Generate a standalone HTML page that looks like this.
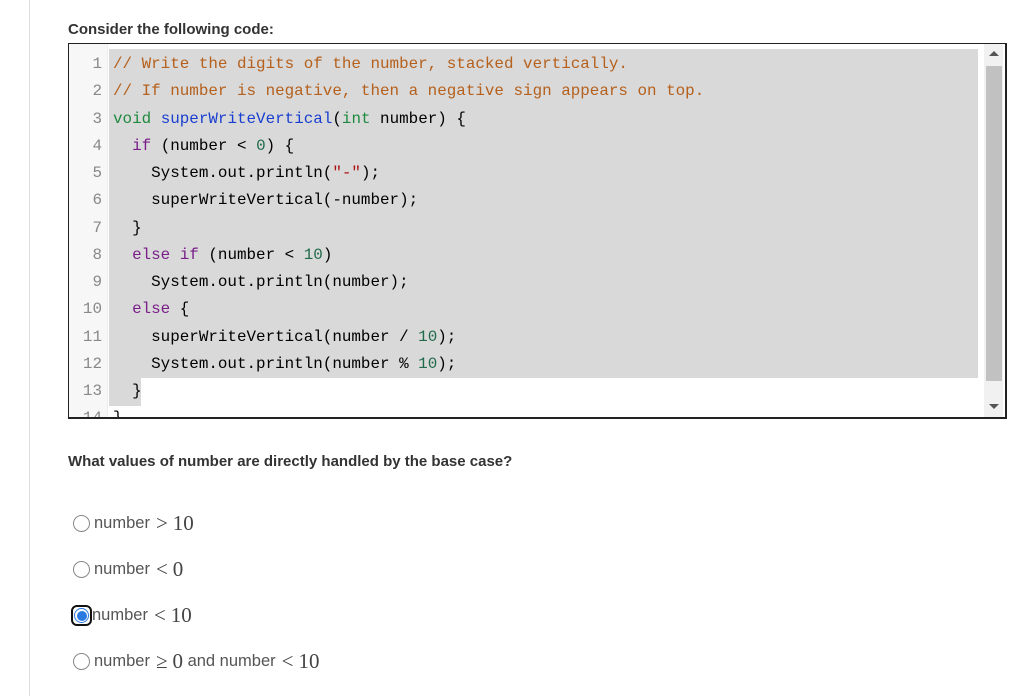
<!DOCTYPE html>
<html><head><style>
body{margin:0;width:1024px;height:696px;background:#fff;font-family:"Liberation Sans",sans-serif;position:relative;overflow:hidden}
.vl{position:absolute;left:29px;top:0;width:1px;height:696px;background:#ddd}
.t{position:absolute;left:68px;font-size:15px;font-weight:bold;color:#333}
.box{position:absolute;left:68px;top:43px;width:936px;height:373px;border:1px solid #222;border-width:1px 2px 2px 1px;overflow:hidden;background:#fff}
.gut{position:absolute;left:0;top:0;width:38px;height:100%;background:#f7f7f7;border-right:1px solid #eee}
.hl{position:absolute;left:40px;top:5px;width:869px;height:329px;background:#d9d9d9}
.hl2{position:absolute;left:40px;top:334px;width:32px;height:28px;background:#d9d9d9}
.code{position:absolute;left:0;top:7px;font-family:"Liberation Mono",monospace;font-size:15.9px;line-height:27.25px;white-space:pre;color:#000}
.n{display:inline-block;width:33px;text-align:right;color:#888;margin-right:11px}
.c{color:#b5601c}.k{color:#7a1f8a}.g{color:#1f8a3f}.f{color:#1a3fd0}.num{color:#1f6a4a}.s{color:#a11}
.sb{position:absolute;left:915px;top:0;width:19px;height:100%;background:#f1f1f1}
.th{position:absolute;left:2px;top:22px;width:16px;height:315px;background:#c1c1c1}
.opt{position:absolute;left:73px;font-size:16.5px;color:#555;display:flex;align-items:center}
.r{width:17px;height:17px;border:1px solid #888;border-radius:50%;box-sizing:border-box;margin-right:4px;background:#fff}
.m{font-family:"Liberation Serif",serif;font-size:21px;color:#444}
.o{margin:0 5px 0 6px}
</style></head><body>
<div class="vl"></div>
<div class="t" style="top:21px">Consider the following code:</div>
<div class="box">
<div class="gut"></div><div class="hl"></div><div class="hl2"></div>
<div class="code"><span class="n">1</span><span class="c">// Write the digits of the number, stacked vertically.</span>
<span class="n">2</span><span class="c">// If number is negative, then a negative sign appears on top.</span>
<span class="n">3</span><span class="g">void</span> <span class="f">superWriteVertical</span>(<span class="g">int</span> number) {
<span class="n">4</span>  <span class="k">if</span> (number &lt; <span class="num">0</span>) {
<span class="n">5</span>    System.out.println(<span class="s">"-"</span>);
<span class="n">6</span>    superWriteVertical(-number);
<span class="n">7</span>  }
<span class="n">8</span>  <span class="k">else if</span> (number &lt; <span class="num">10</span>)
<span class="n">9</span>    System.out.println(number);
<span class="n">10</span>  <span class="k">else</span> {
<span class="n">11</span>    superWriteVertical(number / <span class="num">10</span>);
<span class="n">12</span>    System.out.println(number % <span class="num">10</span>);
<span class="n">13</span>  }
<span class="n">14</span>}</div>
<div class="sb"><div style="position:absolute;left:5px;top:7px;border:5px solid transparent;border-bottom:5px solid #555;border-top:0"></div><div class="th"></div><div style="position:absolute;left:5px;top:360px;border:5px solid transparent;border-top:5px solid #555;border-bottom:0"></div></div>
</div>
<div class="t" style="top:453px">What values of number are directly handled by the base case?</div>
<div class="opt" style="top:511px"><div class="r"></div>number<span class="m"><span class="o">&gt;</span>10</span></div>
<div class="opt" style="top:557px"><div class="r"></div>number<span class="m"><span class="o">&lt;</span>0</span></div>
<div class="opt" style="top:603px"><div style="width:21px;height:21px;border:2px solid #111;border-radius:6px;box-sizing:border-box;margin-left:-2px;margin-right:0;display:flex;align-items:center;justify-content:center"><div style="width:15px;height:15px;border-radius:50%;border:1px solid #2a7ae2;box-sizing:border-box;display:flex;align-items:center;justify-content:center;background:#fff"><div style="width:10px;height:10px;border-radius:50%;background:#2a7ae2"></div></div></div>number<span class="m"><span class="o">&lt;</span>10</span></div>
<div class="opt" style="top:649px"><div class="r"></div>number<span class="m"><span class="o">≥</span>0</span>&nbsp;and number<span class="m"><span class="o">&lt;</span>10</span></div>
</body></html>
